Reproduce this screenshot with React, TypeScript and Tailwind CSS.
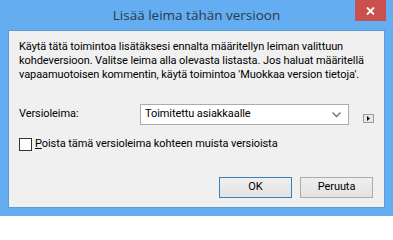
import React from "react";

export default function App() {
  const font = { fontFamily: 'Roboto, "Liberation Sans", Arial, sans-serif' };
  return (
    <div className="w-[393px] h-[216px] bg-[#64adf0] flex flex-col overflow-hidden" style={font}>
      <div className="relative h-[30px] flex items-center justify-center shrink-0">
        <span className="text-[13.5px] text-[#2b3a4a] mt-[1px]" style={{ fontFamily: '"Open Sans", "Noto Sans", sans-serif' }}>
          Lisää leima tähän versioon
        </span>
        <div className="absolute right-[7px] top-0 w-[31px] h-[21px] bg-[#c8504e] flex items-center justify-center">
          <svg width="9" height="8" viewBox="0 0 9 8">
            <path d="M1 0.5 L8 7.5 M8 0.5 L1 7.5" stroke="#ffffff" strokeWidth="1.8" />
          </svg>
        </div>
      </div>
      <div className="mx-[8px] h-[178px] border border-[#5b9bd6] bg-[#f0f0f0] flex flex-col text-[11px] tracking-[-0.08px] text-black whitespace-nowrap">
        <div className="pl-[10px] pr-[4px] pt-[9px] leading-[14px]">
          <div>Käytä tätä toimintoa lisätäksesi ennalta määritellyn leiman valittuun</div>
          <div>kohdeversioon. Valitse leima alla olevasta listasta. Jos haluat määritellä</div>
          <div>vapaamuotoisen kommentin, käytä toimintoa 'Muokkaa version tietoja'.</div>
        </div>
        <div className="flex items-start mt-[22px] pl-[10px]">
          <div className="w-[121px] h-[21px] flex items-center">Versioleima:</div>
          <div className="w-[209px] h-[21px] border border-[#acacac] bg-white flex items-center justify-between pl-[4px] pr-[7px]">
            <span>Toimitettu asiakkaalle</span>
            <svg width="9" height="6" viewBox="0 0 9 6">
              <path d="M0.5 0.5 L4.5 4.5 L8.5 0.5" stroke="#707070" strokeWidth="1.3" fill="none" />
            </svg>
          </div>
          <div className="ml-[14px] mt-[10px] w-[11px] h-[9px] border border-[#9a9a9a] bg-[#e8e8e8] flex items-center justify-center">
            <svg width="3" height="5" viewBox="0 0 3 5">
              <path d="M0 0 L3 2.5 L0 5 Z" fill="#000" />
            </svg>
          </div>
        </div>
        <div className="flex items-center mt-[11px] pl-[10px]">
          <div className="w-[13px] h-[13px] border border-[#333333] bg-white" />
          <span className="ml-[3px]"><span className="underline">P</span>oista tämä versioleima kohteen muista versioista</span>
        </div>
        <div className="flex justify-end mt-[24px] pr-[11px] gap-[8px]">
          <div className="w-[73px] h-[21px] border border-[#3c7fb1] bg-gradient-to-b from-[#efefef] to-[#e3e3e3] flex items-center justify-center">OK</div>
          <div className="w-[73px] h-[21px] border border-[#acacac] bg-gradient-to-b from-[#efefef] to-[#e3e3e3] flex items-center justify-center">Peruuta</div>
        </div>
      </div>
    </div>
  );
}
